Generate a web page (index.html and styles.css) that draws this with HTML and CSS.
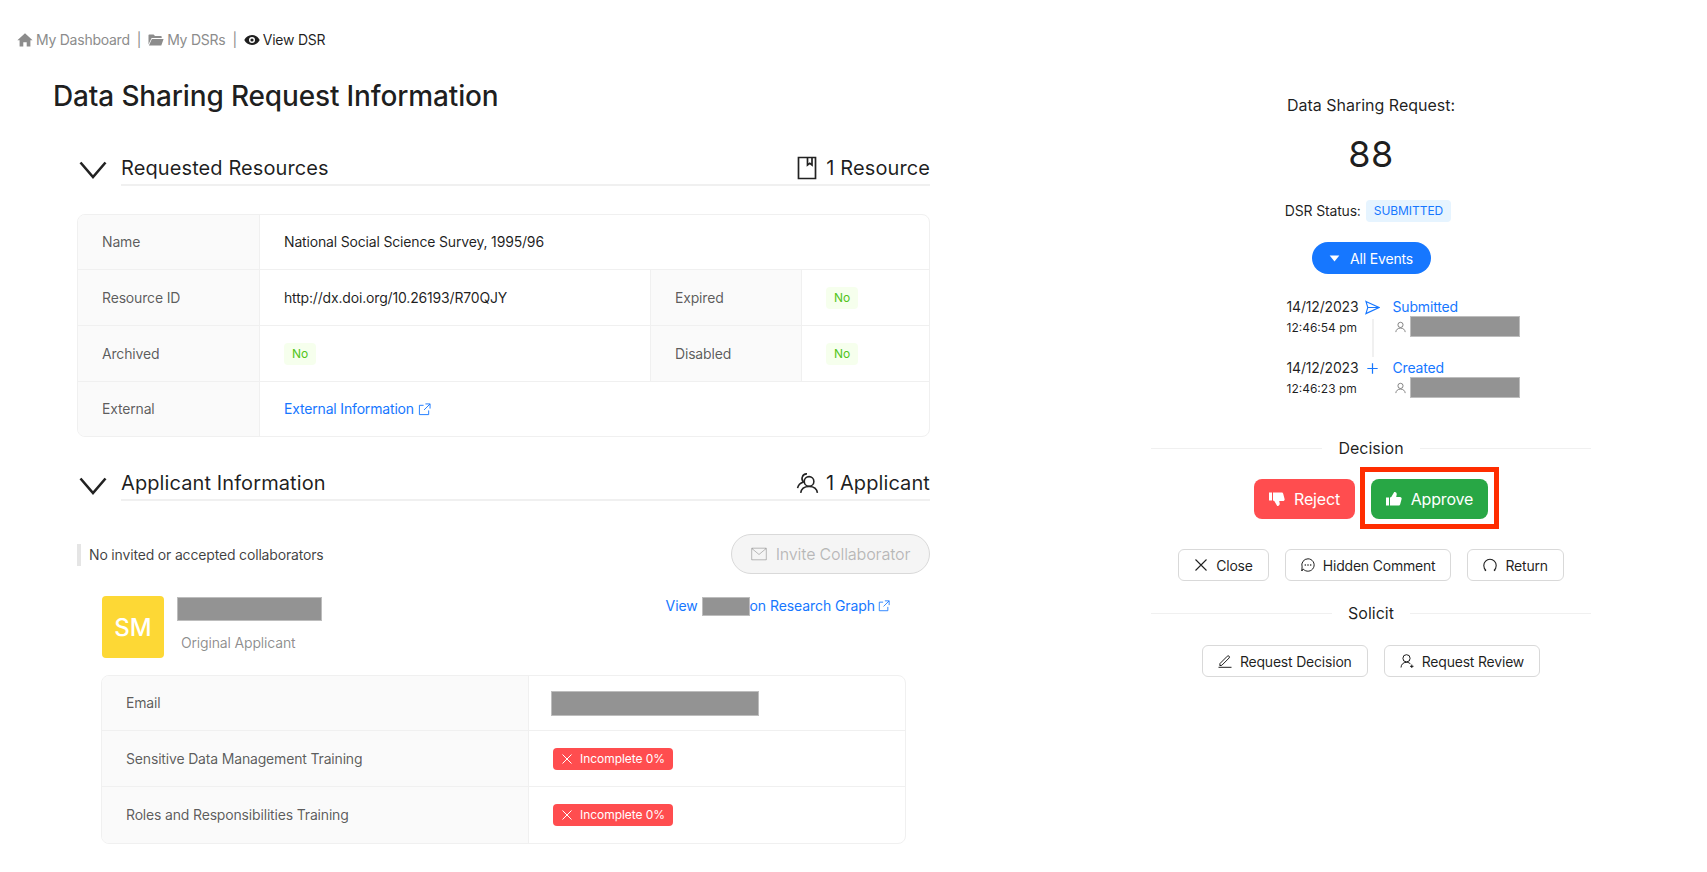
FILE: index.html
```html
<!DOCTYPE html>
<html lang="en">
<head>
<meta charset="utf-8">
<title>View DSR</title>
<link rel="stylesheet" href="styles.css">
</head>
<body>
<nav class="crumbs">
  <span class="crumb"><svg class="ic14" viewBox="0 0 16 16"><path fill="currentColor" d="M8 1.2 15.6 8.2H13.4V14.6H9.7V10.2H6.3V14.6H2.6V8.2H.4Z"/></svg>My Dashboard</span>
  <span class="sep">|</span>
  <span class="crumb"><svg class="ic14" viewBox="0 0 16 16"><path fill="currentColor" d="M.5 3.2C.5 2.8.8 2.5 1.2 2.5H5.6L7 4H13C13.4 4 13.7 4.3 13.7 4.7V6H3.6L.5 12.5ZM3.9 7H15.6L13.3 13.5H.9Z"/></svg>My DSRs</span>
  <span class="sep">|</span>
  <span class="crumb current"><svg class="ic14" viewBox="0 0 16 16"><path fill="currentColor" fill-rule="evenodd" d="M8 3C11.6 3 14.4 5.2 15.7 8 14.4 10.8 11.6 13 8 13S1.6 10.8.3 8C1.6 5.2 4.4 3 8 3ZM8 5A3 3 0 1 0 8 11 3 3 0 0 0 8 5ZM8 6.4A1.6 1.6 0 1 1 8 9.6 1.6 1.6 0 0 1 8 6.4Z"/></svg>View DSR</span>
</nav>

<main class="page">
  <div class="left">
    <h1 class="title">Data Sharing Request Information</h1>

    <section class="section">
      <header class="sec-head">
        <svg class="chev" viewBox="0 0 28 18"><path d="M1.5 1.5 14 16 26.5 1.5" fill="none" stroke="currentColor" stroke-width="2.6"/></svg>
        <div class="sec-bar">
          <h2 class="sec-title">Requested Resources</h2>
          <span class="sec-count"><svg class="ic-count" viewBox="0 0 20 24"><path d="M1.5 1.5H18.5V22.5H1.5ZM10.5 1.5V9L12.8 7.4 15 9V1.5" fill="none" stroke="currentColor" stroke-width="1.7"/></svg>1 Resource</span>
        </div>
      </header>
      <div class="desc desc-res">
        <div class="lbl">Name</div>
        <div class="val span3">National Social Science Survey, 1995/96</div>
        <div class="lbl">Resource ID</div>
        <div class="val">http://dx.doi.org/10.26193/R70QJY</div>
        <div class="lbl">Expired</div>
        <div class="val end"><span class="tag-no">No</span></div>
        <div class="lbl">Archived</div>
        <div class="val"><span class="tag-no">No</span></div>
        <div class="lbl">Disabled</div>
        <div class="val end"><span class="tag-no">No</span></div>
        <div class="lbl last">External</div>
        <div class="val span3 last"><a class="link">External Information<svg class="ic-ext" viewBox="0 0 14 14"><path d="M11.5 8V12.5H1.5V2.5H6M8 1H13V6M13 1 6.5 7.5" fill="none" stroke="currentColor" stroke-width="1"/></svg></a></div>
      </div>
    </section>

    <section class="section section-app">
      <header class="sec-head">
        <svg class="chev" viewBox="0 0 28 18"><path d="M1.5 1.5 14 16 26.5 1.5" fill="none" stroke="currentColor" stroke-width="2.6"/></svg>
        <div class="sec-bar">
          <h2 class="sec-title">Applicant Information</h2>
          <span class="sec-count"><svg class="ic-people" viewBox="0 0 22 22"><g fill="none" stroke="currentColor" stroke-width="1.5"><circle cx="12.5" cy="9" r="4.6"/><path d="M4.5 20C5 16 8 13.8 12.5 13.8S20 16 20.5 20M10.5 1.8A4.4 4.4 0 0 0 6 4.8C5.3 6.6 6 8.4 7.2 9.6 4 10.6 2 12.8 1.5 15.5"/></g></svg>1 Applicant</span>
        </div>
      </header>

      <div class="collab-row">
        <p class="notice">No invited or accepted collaborators</p>
        <button class="btn-invite" disabled><svg class="ic-mail" viewBox="0 0 16 14"><path d="M.7 1.2H15.3V12.8H.7ZM1 1.6 8 7.5 15 1.6" fill="none" stroke="currentColor" stroke-width="1"/></svg>Invite Collaborator</button>
      </div>

      <div class="applicant">
        <div class="avatar">SM</div>
        <div class="app-meta">
          <div class="redact r-name"></div>
          <div class="app-role">Original Applicant</div>
        </div>
        <a class="link rg-link">View <span class="redact r-inline"></span>on Research Graph<svg class="ic-ext" viewBox="0 0 14 14"><path d="M11.5 8V12.5H1.5V2.5H6M8 1H13V6M13 1 6.5 7.5" fill="none" stroke="currentColor" stroke-width="1"/></svg></a>
      </div>

      <div class="desc desc-app">
        <div class="lbl">Email</div>
        <div class="val end"><div class="redact r-email"></div></div>
        <div class="lbl">Sensitive Data Management Training</div>
        <div class="val end"><span class="tag-bad"><svg class="ic-x" viewBox="0 0 12 12"><path d="M1.5 1.5 10.5 10.5M10.5 1.5 1.5 10.5" stroke="currentColor" stroke-width="1"/></svg>Incomplete 0%</span></div>
        <div class="lbl last">Roles and Responsibilities Training</div>
        <div class="val end last"><span class="tag-bad"><svg class="ic-x" viewBox="0 0 12 12"><path d="M1.5 1.5 10.5 10.5M10.5 1.5 1.5 10.5" stroke="currentColor" stroke-width="1"/></svg>Incomplete 0%</span></div>
      </div>
    </section>
  </div>

  <aside class="right">
    <div class="dsr-label">Data Sharing Request:</div>
    <div class="dsr-num">88</div>
    <div class="status"><span>DSR Status:</span><span class="tag-status">SUBMITTED</span></div>
    <button class="btn-events"><svg class="ic-caret" viewBox="0 0 12 8"><path fill="currentColor" d="M.5.5H11.5L6 7.5Z"/></svg>All Events</button>

    <div class="timeline">
      <div class="event">
        <div class="when"><div class="date">14/12/2023</div><div class="time">12:46:54 pm</div></div>
        <div class="axis"><svg class="ic-ev" viewBox="0 0 16 16"><path d="M1 1.5 15 8 1 14.5 3 8ZM3 8H15" fill="none" stroke="currentColor" stroke-width="1.2"/></svg><span class="axis-line"></span></div>
        <div class="what"><div class="ev-name">Submitted</div><div class="ev-user"><svg class="ic-user" viewBox="0 0 14 14"><g fill="none" stroke="currentColor" stroke-width="1"><circle cx="7" cy="4.3" r="3.3"/><path d="M1 13.5C1.3 10.5 3.5 8.4 7 8.4S12.7 10.5 13 13.5"/></g></svg><span class="redact r-user"></span></div></div>
      </div>
      <div class="event">
        <div class="when"><div class="date">14/12/2023</div><div class="time">12:46:23 pm</div></div>
        <div class="axis"><svg class="ic-ev" viewBox="0 0 16 16"><path d="M8 2.5V13.5M2.5 8H13.5" fill="none" stroke="currentColor" stroke-width="1.3"/></svg></div>
        <div class="what"><div class="ev-name">Created</div><div class="ev-user"><svg class="ic-user" viewBox="0 0 14 14"><g fill="none" stroke="currentColor" stroke-width="1"><circle cx="7" cy="4.3" r="3.3"/><path d="M1 13.5C1.3 10.5 3.5 8.4 7 8.4S12.7 10.5 13 13.5"/></g></svg><span class="redact r-user"></span></div></div>
      </div>
    </div>

    <div class="divider div-decision"><span>Decision</span></div>
    <div class="actions-main">
      <button class="btn-big reject"><svg class="ic-thumb" viewBox="0 0 16 16"><path fill="currentColor" d="M0 1.5H3V9.5H0ZM4 1.5H12.5C13.4 1.5 14 2 14.2 2.8L15.6 8C15.9 9 15.2 10 14 10H10.2L10.7 12.4C11 13.7 10 15 8.8 15L8.2 15 5.3 10 4 9.5Z"/></svg>Reject</button>
      <button class="btn-big approve"><svg class="ic-thumb" viewBox="0 0 16 16"><path fill="currentColor" d="M0 6.5H3V14.5H0ZM4 14.5H12.5C13.4 14.5 14 14 14.2 13.2L15.6 8C15.9 7 15.2 6 14 6H10.2L10.7 3.6C11 2.3 10 1 8.8 1L8.2 1 5.3 6 4 6.5Z"/></svg>Approve</button>
    </div>
    <div class="actions">
      <button class="btn"><svg class="ic-btn" viewBox="0 0 14 14"><path d="M1.5 1.5 12.5 12.5M12.5 1.5 1.5 12.5" stroke="currentColor" stroke-width="1.1"/></svg>Close</button>
      <button class="btn"><svg class="ic-btn" viewBox="0 0 14 14"><path d="M7 .8A6.2 6.2 0 1 1 2.2 11L.8 13 1.1 8.9A6.2 6.2 0 0 1 7 .8Z" fill="none" stroke="currentColor" stroke-width="1"/><circle cx="4.3" cy="7" r=".8" fill="currentColor"/><circle cx="7" cy="7" r=".8" fill="currentColor"/><circle cx="9.7" cy="7" r=".8" fill="currentColor"/></svg>Hidden Comment</button>
      <button class="btn"><svg class="ic-btn" viewBox="0 0 14 14"><path d="M3 12.5C1.5 11.3.8 9.5.8 7.5A6.2 6.2 0 0 1 13.2 7.5C13.2 9.5 12.5 11.3 11 12.5M3 12.8 1.6 11.5M11 12.8 12.4 11.5" fill="none" stroke="currentColor" stroke-width="1.1"/></svg>Return</button>
    </div>

    <div class="divider div-solicit"><span>Solicit</span></div>
    <div class="actions">
      <button class="btn"><svg class="ic-btn" viewBox="0 0 14 14"><path d="M2 9.5 9.3 2.2C9.8 1.7 10.6 1.7 11.1 2.2 11.6 2.7 11.6 3.5 11.1 4L3.8 11.3 1.8 11.6ZM.5 13.3H13.5" fill="none" stroke="currentColor" stroke-width="1"/></svg>Request Decision</button>
      <button class="btn"><svg class="ic-btn" viewBox="0 0 14 14"><g fill="none" stroke="currentColor" stroke-width="1"><circle cx="6.5" cy="4.3" r="3.6"/><path d="M1 13.5C1.2 10.4 3.2 8.3 6.5 8.3 8.3 8.3 9.8 9 10.7 10.2M10 12.3H13.5M11.8 10.6V14"/></g></svg>Request Review</button>
    </div>
  </aside>
</main>
</body>
</html>
```

FILE: styles.css
```css
* { box-sizing: border-box; }
html, body { margin: 0; padding: 0; }
body {
  height: 872px;
  overflow: hidden;
  background: #fff;
  color: rgba(0,0,0,.88);
  font-family: Inter, "Liberation Sans", sans-serif;
  font-size: 14px;
  line-height: 22px;
  letter-spacing: -.17px;
}
h1, h2, p { margin: 0; font-weight: 400; }
button { font-family: inherit; letter-spacing: inherit; }
svg { display: block; flex: none; }

.crumbs { display: flex; align-items: center; height: 22px; margin: 29px 0 0 17px; color: #8c8c8c; letter-spacing: -.25px; }
.crumb { display: flex; align-items: center; gap: 3px; }
.crumb.current { color: rgba(0,0,0,.88); }
.sep { margin: 0 7px; color: #8c8c8c; }
.ic14 { width: 16px; height: 16px; }

.page { display: flex; }
.left { width: 930px; margin-left: 53px; flex: none; }
.right { width: 440px; margin: 42px 0 0 168px; flex: none; display: flex; flex-direction: column; align-items: center; }

.title { margin-top: 25px; font-size: 28px; line-height: 40px; font-weight: 500; letter-spacing: -.15px; }

.section { margin-left: 24px; margin-top: 37px; width: 853px; }
.section-app { margin-top: 32px; }
.sec-head { display: flex; align-items: flex-start; height: 33px; }
.section-app .sec-head, .section-app .sec-bar { height: 32px; }
.chev { width: 28px; height: 18px; margin: 8px 14px 0 2px; color: #222; }
.sec-bar { flex: 1; display: flex; justify-content: space-between; align-items: center; height: 33px; border-bottom: 2px solid #f0f0f0; padding-bottom: 2px; letter-spacing: .1px; }
.sec-title { font-size: 20px; line-height: 28px; }
.sec-count { display: flex; align-items: center; font-size: 20px; line-height: 28px; }
.ic-count { width: 20px; height: 24px; margin-right: 9px; color: #222; }
.ic-people { width: 23px; height: 23px; margin-right: 7px; color: #222; }

.desc { display: grid; border: 1px solid #f0f0f0; border-radius: 8px; overflow: hidden; }
.desc-res { grid-template-columns: 182px 391px 151px 1fr; margin-top: 28px; }
.desc-app { grid-template-columns: 427px 1fr; width: 805px; margin: 17px 0 0 24px; }
.lbl, .val { display: flex; align-items: center; height: 56px; padding: 0 24px; border-bottom: 1px solid #f0f0f0; }
.lbl:nth-child(1), .val:nth-child(2) { height: 55px; }
.lbl { background: #fafafa; color: rgba(0,0,0,.65); border-right: 1px solid #f0f0f0; }
.val { border-right: 1px solid #f0f0f0; }
.span3, .end { border-right: 0; }
.span3 { grid-column: span 3; }
.lbl.last, .val.last { border-bottom: 0; height: 54px; }
.desc-app .lbl.last, .desc-app .val.last { height: 56px; }

.tag-no { display: inline-block; height: 22px; padding: 0 8px; font-size: 12px; line-height: 22px; letter-spacing: 0; color: #52c41a; background: #f6ffed; border-radius: 4px; }
.tag-bad { display: inline-flex; align-items: center; gap: 7px; height: 22px; padding: 0 8px; font-size: 12px; letter-spacing: -.05px; color: #fff; background: #ff4d4f; border-radius: 4px; }
.ic-x { width: 12px; height: 12px; }

.link { display: inline-flex; align-items: center; color: #1677ff; }
.ic-ext { width: 13px; height: 13px; margin-left: 4px; }

.collab-row { display: flex; justify-content: space-between; align-items: center; margin-top: 33px; height: 40px; }
.notice { height: 22px; margin-top: 2px; padding-left: 8px; border-left: 4px solid #e5e5e5; color: rgba(0,0,0,.75); }
.btn-invite { display: flex; align-items: center; justify-content: center; width: 199px; height: 40px; padding: 0; border: 1px solid #d9d9d9; border-radius: 20px; background: #f5f5f5; color: rgba(0,0,0,.25); font-size: 16px; letter-spacing: -.2px; }
.ic-mail { width: 16px; height: 14px; margin-right: 9px; }

.applicant { display: flex; position: relative; height: 62px; margin: 22px 0 0 25px; }
.avatar { width: 62px; height: 62px; padding-top: 2px; border-radius: 4px; background: #fdd835; color: #fff; font-size: 24px; font-weight: 500; letter-spacing: 0; display: flex; align-items: center; justify-content: center; }
.app-meta { margin-left: 13px; }
.redact { display: block; background: #939393; border: 1px solid #bdbdbd; }
.r-name { width: 145px; height: 24px; margin-top: 1px; }
.app-role { margin: 11px 0 0 4px; color: rgba(0,0,0,.45); }
.rg-link { position: absolute; right: 40px; top: -1px; white-space: pre; letter-spacing: -.08px; }
.rg-link .ic-ext { width: 12px; height: 12px; margin-left: 3px; }
.r-inline { width: 48px; height: 19px; }
.r-email { width: 208px; height: 25px; margin-left: -2px; }

.dsr-label { font-size: 16px; line-height: 28px; margin-top: -2px; letter-spacing: 0; }
.dsr-num { font-size: 36px; line-height: 44px; margin-top: 13px; letter-spacing: .5px; }
.status { display: flex; align-items: center; margin-top: 24px; gap: 5px; margin-right: 6px; }
.tag-status { height: 22px; padding: 0 8px; border-radius: 4px; font-size: 12px; line-height: 22px; letter-spacing: -.05px; color: #1677ff; background: #e6f4ff; }
.btn-events { display: flex; align-items: center; justify-content: center; width: 119px; height: 32px; margin-top: 20px; border: 0; padding: 0; border-radius: 16px; background: #1677ff; color: #fff; font-size: 14px; }
.ic-caret { width: 11px; height: 7px; margin-right: 10px; }

.timeline { width: 233px; margin: 22px 0 0 64px; }
.event { display: flex; height: 61px; }
.when { width: 72px; }
.date { font-size: 14px; line-height: 22px; white-space: nowrap; }
.time { font-size: 12px; line-height: 18px; white-space: nowrap; margin-top: 1px; letter-spacing: 0; }
.axis { width: 28px; margin-right: 6px; flex: none; display: flex; flex-direction: column; align-items: center; }
.ic-ev { width: 15px; height: 15px; margin-top: 4px; color: #1677ff; }
.axis-line { width: 2px; height: 39px; margin-top: 4px; background: #f0f0f0; }
.what { min-width: 0; }
.ev-name { color: #1677ff; line-height: 21px; }
.ev-user { display: flex; align-items: center; margin: -1px 0 0 2px; gap: 4px; }
.ic-user { width: 11px; height: 12px; color: #666; }
.r-user { width: 110px; height: 21px; }

.divider { display: flex; align-items: center; width: 440px; height: 22px; }
.divider::before, .divider::after { content: ""; flex: 1; height: 1px; background: #f0f0f0; }
.divider span { padding: 0 16px; font-size: 16px; letter-spacing: 0; }
.div-decision { margin-top: 19px; }
.div-solicit { margin-top: 21px; }

.actions-main { display: flex; gap: 16px; margin-top: 20px; }
.btn-big { display: flex; align-items: center; justify-content: center; height: 40px; border: 0; padding: 0; border-radius: 8px; color: #fff; font-size: 16px; position: relative; }
.reject { width: 101px; background: #ff4d4f; }
.approve { width: 117px; background: #28a745; }
.approve::after { content: ""; position: absolute; top: -12px; bottom: -10px; left: -11px; right: -11px; border: 5px solid #ff2d00; }
.ic-thumb { width: 16px; height: 16px; margin-right: 9px; }

.actions { display: flex; gap: 16px; margin-top: 20px; }
.actions-main + .actions { margin-top: 30px; }
.div-solicit + .actions { margin-top: 21px; }
.btn { display: flex; align-items: center; height: 32px; padding: 0 15px; background: #fff; border: 1px solid #d9d9d9; border-radius: 6px; font-size: 14px; letter-spacing: -.2px; color: rgba(0,0,0,.88); }
.ic-btn { width: 14px; height: 14px; margin-right: 8px; }
```
